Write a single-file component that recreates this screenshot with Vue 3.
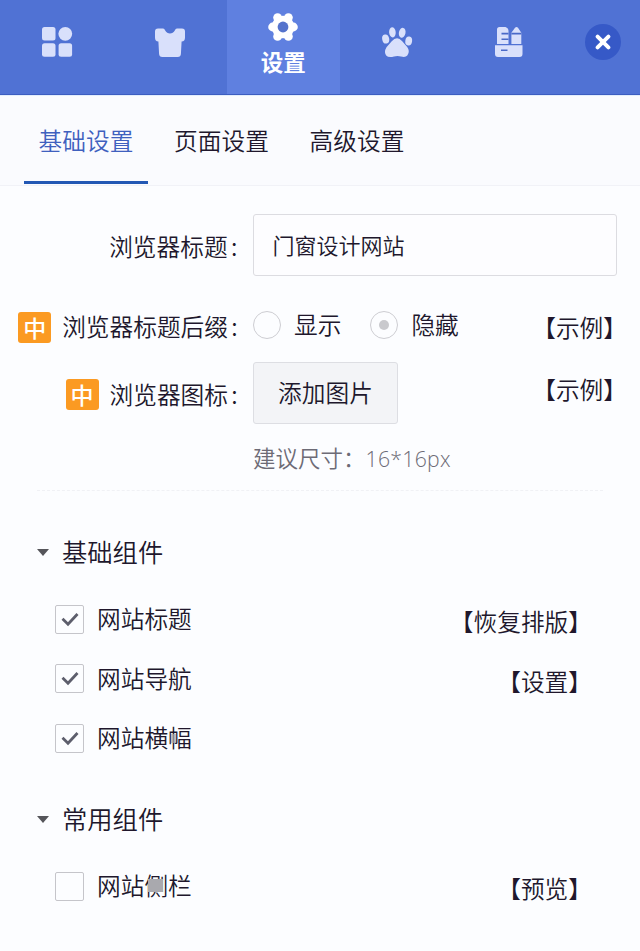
<script setup>
import { ref } from 'vue'

const tabs = ['基础设置', '页面设置', '高级设置']
const activeTab = ref(0)
const siteTitle = ref('门窗设计网站')
const suffix = ref('hide')
const groups = ref([
  {
    name: '基础组件',
    items: [
      { name: '网站标题', checked: true, action: '恢复排版' },
      { name: '网站导航', checked: true, action: '设置' },
      { name: '网站横幅', checked: true, mark: 'narrow' }
    ]
  },
  {
    name: '常用组件',
    items: [{ name: '网站侧栏', checked: false, action: '预览', mark: 'wide' }]
  }
])
</script>

<template>
  <div class="panel">
    <header class="toolbar">
      <button class="tool">
        <svg width="32" height="32" viewBox="0 0 32 32" fill="currentColor">
          <rect x="1" y="1" width="13.5" height="13.5" rx="2.5" />
          <circle cx="24.3" cy="7.8" r="6.9" />
          <rect x="1" y="17.3" width="13.5" height="13.5" rx="2.5" />
          <rect x="17.6" y="17.3" width="13.5" height="13.5" rx="2.5" />
        </svg>
      </button>
      <button class="tool">
        <svg width="32" height="32" viewBox="0 0 32 32" fill="currentColor">
          <path d="M4 2.5H9C10.2 2.5 10.5 3.3 11.2 4.6C13.2 8.4 18.8 8.4 20.8 4.6C21.5 3.3 21.8 2.5 23 2.5H28Q31 2.5 31 5.5V11.5Q31 15.5 27.6 15.5L26.9 28Q26.7 31 23.7 31H8.3Q5.3 31 5.1 28L4.4 15.5Q1 15.5 1 11.5V5.5Q1 2.5 4 2.5Z" />
        </svg>
      </button>
      <button class="tool tool-active">
        <svg width="32" height="30" viewBox="0 0 32 30" fill="#fff">
          <circle cx="16" cy="15" r="11.3" />
          <circle cx="26.4" cy="15" r="4.4" />
          <circle cx="5.6" cy="15" r="4.4" />
          <circle cx="21.4" cy="5.6" r="4.4" />
          <circle cx="10.6" cy="5.6" r="4.4" />
          <circle cx="21.4" cy="24.4" r="4.4" />
          <circle cx="10.6" cy="24.4" r="4.4" />
          <circle cx="16" cy="15" r="5.4" fill="#5573cc" />
        </svg>
        <span class="tool-label">设置</span>
      </button>
      <button class="tool">
        <svg width="32" height="32" viewBox="0 0 32 32" fill="currentColor">
          <ellipse cx="11.4" cy="6.3" rx="3.3" ry="5.1" transform="rotate(-5 11.4 6.3)" />
          <ellipse cx="21.2" cy="6.8" rx="3.3" ry="5" transform="rotate(12 21.2 6.8)" />
          <ellipse cx="4.7" cy="13" rx="3.5" ry="4.6" transform="rotate(-12 4.7 13)" />
          <ellipse cx="27.7" cy="15" rx="3.4" ry="4.6" transform="rotate(8 27.7 15)" />
          <path d="M10.5 15.5Q16 9.5 21 15L26.2 21Q29.5 25.5 26.3 29.5Q24.5 31.7 20 30.5Q16.5 29.5 13 30.5Q7.5 32 5.2 29.5Q2.7 26 5.5 21.3Z" />
        </svg>
      </button>
      <button class="tool">
        <svg width="32" height="32" viewBox="0 0 32 32">
          <path d="M5.5 1H11.5Q14.5 2 14.5 5V18H3V3.5Q3 1 5.5 1ZM21 1.8Q22.5 .2 24 1.8L27.3 6.8V18H17.4V6.8ZM1 19.3H28.5V28Q28.5 31 25.5 31H4Q1 31 1 28Z" fill="currentColor" />
          <path d="M7.5 7.6H14.5M7.5 13.2H14.5M17.4 7.6H27.3M7 24.3H13.5" fill="none" stroke="#4a69c8" stroke-width="1.6" />
        </svg>
      </button>
      <div class="close-area">
        <button class="close">
          <svg width="16" height="16" viewBox="0 0 16 16"><path d="M2.6 2.6L13.4 13.4M13.4 2.6L2.6 13.4" stroke="#fff" stroke-width="3.9" stroke-linecap="round" /></svg>
        </button>
      </div>
    </header>

    <nav class="tabs">
      <button v-for="(tab, i) in tabs" :key="tab" class="tab" :class="{ active: activeTab === i }" @click="activeTab = i">{{ tab }}</button>
    </nav>

    <section class="form">
      <div class="row">
        <div class="label">浏览器标题<span class="colon">:</span></div>
        <input v-model="siteTitle" class="input" type="text" />
      </div>
      <div class="row row-radio">
        <div class="label"><span class="badge">中</span>浏览器标题后缀<span class="colon">:</span></div>
        <div class="radios">
          <button class="radio" @click="suffix = 'show'"><i class="dot" :class="{ on: suffix === 'show' }"></i>显示</button>
          <button class="radio" @click="suffix = 'hide'"><i class="dot" :class="{ on: suffix === 'hide' }"></i>隐藏</button>
        </div>
        <a class="link link-out">【示例】</a>
      </div>
      <div class="row row-icon">
        <div class="label"><span class="badge">中</span>浏览器图标<span class="colon">:</span></div>
        <button class="upload">添加图片</button>
        <a class="link link-out link-up">【示例】</a>
      </div>
      <p class="hint">建议尺寸：<span class="size">16*16px</span></p>
    </section>

    <section v-for="group in groups" :key="group.name" class="group">
      <h2 class="group-title">
        <svg width="12" height="7" viewBox="0 0 12 7"><path d="M0 0H12L6 7Z" fill="#55555a" /></svg>
        <span>{{ group.name }}</span>
      </h2>
      <div v-for="item in group.items" :key="item.name" class="item">
        <button class="box" @click="item.checked = !item.checked">
          <svg v-if="item.checked" width="18" height="15" viewBox="0 0 18 15"><path d="M1.5 6.8L7 12.2L16.5 2" fill="none" stroke="#5d5e6c" stroke-width="2.8" /></svg>
        </button>
        <span class="name" :class="item.mark">{{ item.name }}</span>
        <a v-if="item.action" class="link">【{{ item.action }}】</a>
      </div>
    </section>
  </div>
</template>

<style>
body {
  background: #fcfdff;
}
</style>

<style scoped>
.panel {
  width: 640px;
  height: 951px;
  overflow: hidden;
  background: #fcfdff;
  color: #20172c;
  font-family: "Noto Sans CJK SC", sans-serif;
  font-size: 23.7px;
  font-weight: 350;
  line-height: 1;
}
.panel * {
  box-sizing: border-box;
}
button {
  margin: 0;
  padding: 0;
  border: 0;
  background: none;
  font: inherit;
  color: inherit;
}
.toolbar {
  display: flex;
  height: 95px;
  background: #5072d4;
  border-bottom: 1px solid #3c5dc0;
}
.tool {
  width: 113.3px;
  display: flex;
  flex-direction: column;
  align-items: center;
  justify-content: center;
  padding-bottom: 10px;
  color: #d9e0fb;
}
.tool-active {
  justify-content: flex-start;
  padding: 12px 0 0;
  background: #5f80e0;
  color: #fff;
}
.tool-label {
  margin-top: 7px;
  font-size: 22.5px;
  font-weight: 700;
  line-height: 24px;
}
.close-area {
  flex: 1;
  display: flex;
  align-items: center;
  padding: 0 0 10px 18.5px;
}
.close {
  display: flex;
  align-items: center;
  justify-content: center;
  width: 36px;
  height: 36px;
  border-radius: 50%;
  background: #3659c7;
}
.tabs {
  display: flex;
  gap: 11.5px;
  height: 91px;
  padding-left: 24px;
  background: #fafbfe;
  border-top: 1px solid #e2edfc;
  border-bottom: 1px solid #f1f2f7;
}
.tab {
  width: 124px;
  height: 88px;
  padding: 5px 0 0;
  border-bottom: 3px solid transparent;
}
.tab.active {
  color: #3f60be;
  border-bottom-color: #2358b4;
}
.form {
  height: 304.5px;
  margin: 0 37px;
  padding-top: 28px;
  border-bottom: 1px dashed #f0f1f5;
}
.row {
  display: flex;
  align-items: center;
  height: 62px;
  margin: 0 -14px 0 -37px;
}
.row-radio {
  height: 50px;
  margin-top: 24px;
}
.row-icon {
  margin-top: 12px;
}
.label {
  display: flex;
  align-items: center;
  justify-content: flex-end;
  width: 253px;
  padding: 3px 12px 0 0;
  white-space: nowrap;
}
.colon {
  width: 13px;
  text-align: center;
}
.badge {
  display: flex;
  align-items: center;
  justify-content: center;
  width: 33px;
  height: 31px;
  margin-right: 11px;
  border-radius: 3px;
  background: #fb9a22;
  color: #fff;
  font-size: 23px;
  font-weight: 500;
}
.row-radio .badge {
  margin-top: 2px;
}
.input {
  width: 365px;
  height: 62px;
  padding: 0 19px 2px;
  border: 1px solid #dcdce1;
  border-radius: 3px;
  background: #fdfdff;
  color: inherit;
  font: inherit;
  font-size: 22px;
}
.radios {
  display: flex;
  gap: 28px;
}
.radio {
  display: flex;
  align-items: center;
  gap: 13px;
  height: 28px;
}
.radio + .radio {
  margin-left: 1px;
}
.dot {
  display: flex;
  align-items: center;
  justify-content: center;
  width: 28px;
  height: 28px;
  border: 1px solid #cdcdd2;
  border-radius: 50%;
}
.dot.on::after {
  content: "";
  width: 10px;
  height: 10px;
  border-radius: 50%;
  background: #c9c9cd;
}
.link {
  margin-left: auto;
  margin-top: 6px;
  white-space: nowrap;
}
.link-out {
  margin-right: -10px;
}
.link-up {
  margin-top: -6px;
}
.upload {
  width: 145px;
  height: 62px;
  border: 1px solid #dddee3;
  border-radius: 3px;
  background: #f3f4f7;
}
.hint {
  margin: 21px 0 0 216px;
  color: #6d6b76;
  font-size: 22.5px;
  line-height: 24px;
  white-space: nowrap;
}
.size {
  font-family: "Open Sans", "Noto Sans", sans-serif;
  font-size: 21.2px;
  font-weight: 300;
  letter-spacing: 0.3px;
}
.group {
  height: 267px;
  padding: 42px 48px 0 37px;
}
.group-title {
  display: flex;
  align-items: center;
  gap: 13px;
  height: 40px;
  margin: 0 0 17px;
  font-size: 25.3px;
  font-weight: inherit;
}
.group-title span {
  padding-bottom: 2px;
}
.item {
  display: flex;
  align-items: center;
  height: 59.5px;
  padding-left: 18px;
}
.box {
  display: flex;
  align-items: center;
  justify-content: center;
  width: 29px;
  height: 29px;
  margin-right: 13px;
  border: 1px solid #c5c5ca;
  border-radius: 2px;
}
.name {
  position: relative;
}
.wide::after,
.narrow::after {
  content: "";
  position: absolute;
  background: #a9a9ae;
}
.wide::after {
  left: 51px;
  top: 5px;
  width: 15px;
  height: 13px;
}
.narrow::after {
  left: 74px;
  top: 8px;
  width: 5px;
  height: 9px;
  opacity: 0.7;
}
</style>
